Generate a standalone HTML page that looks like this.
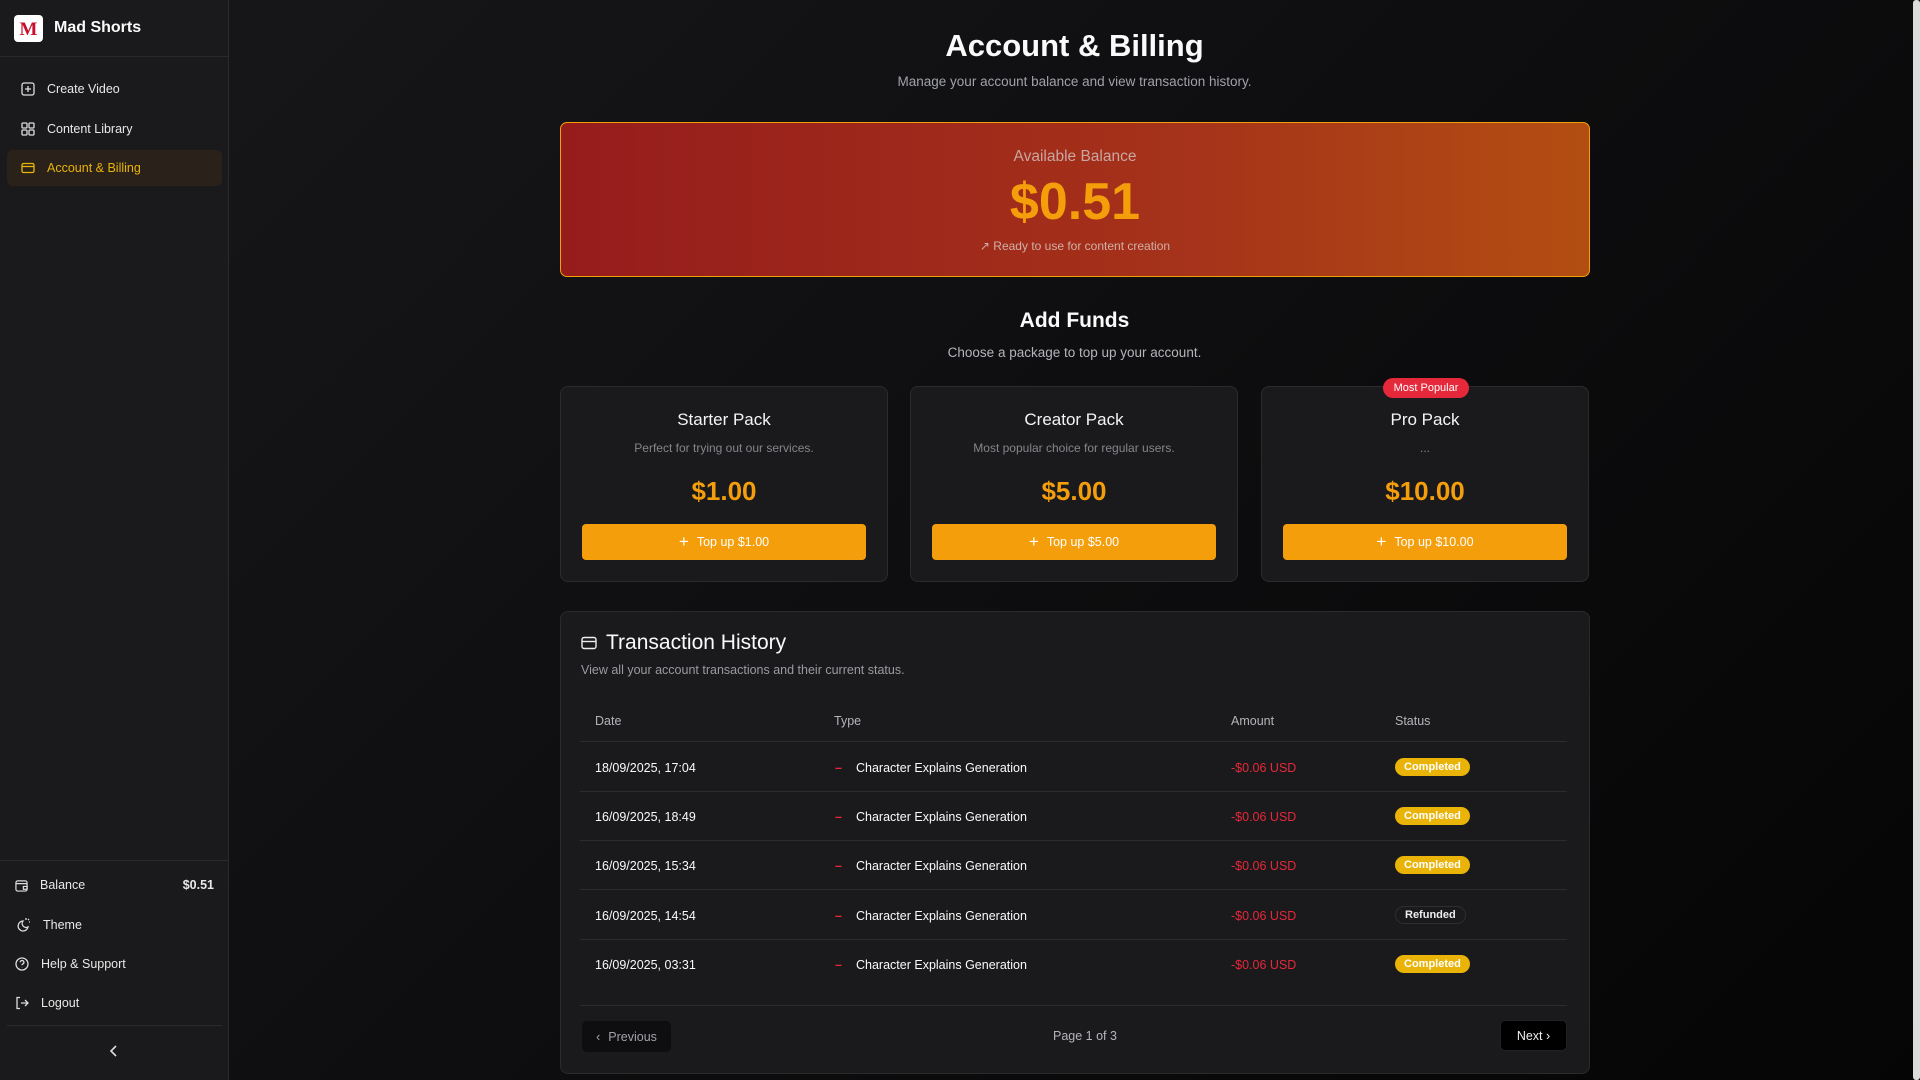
<!DOCTYPE html>
<html><head><meta charset="utf-8"><style>
*{box-sizing:border-box;margin:0;padding:0}
body{width:1920px;height:1080px;overflow:hidden;background:linear-gradient(135deg,#18181b 0%,#0e0e10 50%,#050505 100%);font-family:"Liberation Sans",sans-serif;color:#fafafa;position:relative}
.a{position:absolute}
.sb{left:0;top:0;width:229px;height:1080px;background:#1a1a1c;border-right:1px solid #2a2a2d}
.nav{left:7px;width:215px;height:36px;display:flex;align-items:center;padding-left:14px;font-size:12.5px;color:#e8e8e8;border-radius:6px}
.nav svg{margin-right:12px}
.ct{text-align:center;left:229px;width:1691px}
.card{background:#1a1a1c;border:1px solid #2b2b2e;border-radius:8px}
.pk{top:386px;width:328px;height:196px;text-align:center}
.pk h3{font-size:17px;font-weight:normal;margin-top:23px;color:#f4f4f5}
.pk p{font-size:12px;color:#85858b;margin-top:11px;height:14px}
.pk .pr{font-size:26px;font-weight:bold;color:#f59e0b;margin-top:21px}
.pk .bt{position:absolute;left:21px;right:21px;top:137px;height:36px;background:#f59e0b;border-radius:4px;color:#fff;font-size:12.5px;display:flex;align-items:center;justify-content:center;gap:8px}
.row{left:580px;width:987px;height:49px;border-bottom:1px solid #2c2c2f;font-size:12.5px}
.row span{position:absolute;top:18px}
.dash{color:#e5283a;font-weight:bold}
.bd{background:#eab308;color:#fff;border-radius:10px;padding:3px 9px;font-size:11px;font-weight:bold;top:15px!important}
.rf{background:transparent;border:1px solid #2e2e31;color:#eee;border-radius:10px;padding:2px 9px;font-size:11px;font-weight:bold;top:15px!important}
</style></head><body>
<div class="a sb">
 <div class="a" style="left:14px;top:15px;width:29px;height:27px;background:#fff;border-radius:4px;text-align:center;font:bold 19px 'Liberation Serif',serif;color:#c8102e;line-height:29px">M</div>
 <div class="a" style="left:54px;top:19px;font-size:16px;font-weight:bold">Mad Shorts</div>
 <div class="a" style="left:0;top:56px;width:229px;border-top:1px solid #2a2a2d"></div>
 <div class="a nav" style="top:71px"><svg width="14" height="14" viewBox="0 0 14 14" fill="none" stroke="#ddd" stroke-width="1.3"><rect x="1" y="1" width="12" height="12" rx="2"/><path d="M7 4v6M4 7h6"/></svg>Create Video</div>
 <div class="a nav" style="top:111px"><svg width="14" height="14" viewBox="0 0 14 14" fill="none" stroke="#ddd" stroke-width="1.3"><rect x="1" y="1" width="5" height="5" rx="1"/><rect x="8" y="1" width="5" height="5" rx="1"/><rect x="1" y="8" width="5" height="5" rx="1"/><rect x="8" y="8" width="5" height="5" rx="1"/></svg>Content Library</div>
 <div class="a nav" style="top:150px;background:#2a221a;color:#eab308"><svg width="14" height="14" viewBox="0 0 14 14" fill="none" stroke="#eab308" stroke-width="1.3"><rect x="1" y="2.5" width="12" height="9" rx="1.5"/><path d="M1 5.5h12"/></svg>Account &amp; Billing</div>
 <div class="a" style="left:0;top:860px;width:229px;border-top:1px solid #2a2a2d"></div>
 <div class="a nav" style="top:867px;left:0;padding-left:15px;width:229px"><svg width="13" height="13" viewBox="0 0 14 14" fill="none" stroke="#ddd" stroke-width="1.3"><rect x="1" y="2" width="12" height="11" rx="2"/><path d="M1 5h12M9 8h4v3H9z"/></svg>Balance<span style="position:absolute;right:15px;font-weight:bold">$0.51</span></div>
 <div class="a nav" style="top:907px;left:0;padding-left:15px"><svg width="16" height="16" viewBox="0 0 16 16" fill="none" stroke="#ddd" stroke-width="1.3"><path d="M8 4a5 5 0 1 0 5 6 4 4 0 0 1-5-6z"/><path d="M11 1v2M14 5h1M13 3l1-1"/></svg>Theme</div>
 <div class="a nav" style="top:946px;left:0;padding-left:15px"><svg width="14" height="14" viewBox="0 0 14 14" fill="none" stroke="#ddd" stroke-width="1.3"><circle cx="7" cy="7" r="6"/><path d="M5.3 5.3a1.8 1.8 0 1 1 2.4 1.7c-.5.2-.7.6-.7 1.2M7 10.3v.2"/></svg>Help &amp; Support</div>
 <div class="a nav" style="top:985px;left:0;padding-left:15px"><svg width="14" height="14" viewBox="0 0 14 14" fill="none" stroke="#ddd" stroke-width="1.3"><path d="M5 1.5H2v11h3M6 7h7M10 4l3 3-3 3"/></svg>Logout</div>
 <div class="a" style="left:7px;top:1025px;width:215px;border-top:1px solid #2a2a2d"></div>
 <svg class="a" style="left:108px;top:1044px" width="12" height="14" viewBox="0 0 12 14" fill="none" stroke="#ddd" stroke-width="1.6"><path d="M8 2L3 7l5 5"/></svg>
</div>
<div class="a" style="left:1913px;top:0;width:7px;height:1080px;background:#dcdcdc;border-radius:3px"></div>

<div class="a ct" style="top:28px;font-size:31px;font-weight:bold">Account &amp; Billing</div>
<div class="a ct" style="top:74px;font-size:13.5px;color:#a1a1aa">Manage your account balance and view transaction history.</div>

<div class="a" style="left:560px;top:122px;width:1030px;height:155px;border:1px solid #f59e0b;border-radius:7px;background:linear-gradient(90deg,#961c1c,#a5321a 60%,#b34e12);text-align:center">
 <div style="margin-top:25px;font-size:15.5px;color:#c9a6a0">Available Balance</div>
 <div style="margin-top:6px;font-size:52px;font-weight:bold;color:#f59e0b">$0.51</div>
 <div style="margin-top:7px;font-size:12px;color:#d0b0a8">↗ Ready to use for content creation</div>
</div>

<div class="a ct" style="top:309px;font-size:21px;font-weight:bold">Add Funds</div>
<div class="a ct" style="top:345px;font-size:13.5px;color:#b4b4ba">Choose a package to top up your account.</div>

<div class="a card pk" style="left:560px"><h3>Starter Pack</h3><p>Perfect for trying out our services.</p><div class="pr">$1.00</div><div class="bt"><span style="font-size:17px">+</span>Top up $1.00</div></div>
<div class="a card pk" style="left:910px"><h3>Creator Pack</h3><p>Most popular choice for regular users.</p><div class="pr">$5.00</div><div class="bt"><span style="font-size:17px">+</span>Top up $5.00</div></div>
<div class="a card pk" style="left:1261px"><h3>Pro Pack</h3><p>...</p><div class="pr">$10.00</div><div class="bt"><span style="font-size:17px">+</span>Top up $10.00</div></div>
<div class="a" style="left:1383px;top:378px;width:86px;height:20px;background:#e5283a;border-radius:10px;color:#fff;font-size:11px;text-align:center;line-height:20px">Most Popular</div>

<div class="a card" style="left:560px;top:611px;width:1030px;height:463px"></div>
<svg class="a" style="left:581px;top:636px" width="16" height="14" viewBox="0 0 16 14" fill="none" stroke="#eee" stroke-width="1.4"><rect x="1" y="1.5" width="14" height="11" rx="2"/><path d="M1 5.5h14"/></svg>
<div class="a" style="left:606px;top:631px;font-size:21px">Transaction History</div>
<div class="a" style="left:581px;top:663px;font-size:12.5px;color:#9a9aa0">View all your account transactions and their current status.</div>
<div class="a row" style="top:693px;color:#b4b4ba"><span style="left:15px;top:21px">Date</span><span style="left:254px;top:21px">Type</span><span style="left:651px;top:21px">Amount</span><span style="left:815px;top:21px">Status</span></div>
<div class="a row" style="top:743px"><span style="left:15px">18/09/2025, 17:04</span><span class="dash" style="left:255px">–</span><span style="left:276px">Character Explains Generation</span><span style="left:651px;color:#e5283a">-$0.06 USD</span><span class="bd" style="left:815px">Completed</span></div>
<div class="a row" style="top:792px"><span style="left:15px">16/09/2025, 18:49</span><span class="dash" style="left:255px">–</span><span style="left:276px">Character Explains Generation</span><span style="left:651px;color:#e5283a">-$0.06 USD</span><span class="bd" style="left:815px">Completed</span></div>
<div class="a row" style="top:841px"><span style="left:15px">16/09/2025, 15:34</span><span class="dash" style="left:255px">–</span><span style="left:276px">Character Explains Generation</span><span style="left:651px;color:#e5283a">-$0.06 USD</span><span class="bd" style="left:815px">Completed</span></div>
<div class="a row" style="top:891px"><span style="left:15px">16/09/2025, 14:54</span><span class="dash" style="left:255px">–</span><span style="left:276px">Character Explains Generation</span><span style="left:651px;color:#e5283a">-$0.06 USD</span><span class="rf" style="left:815px">Refunded</span></div>
<div class="a row" style="top:940px;height:66px"><span style="left:15px">16/09/2025, 03:31</span><span class="dash" style="left:255px">–</span><span style="left:276px">Character Explains Generation</span><span style="left:651px;color:#e5283a">-$0.06 USD</span><span class="bd" style="left:815px">Completed</span></div>
<div class="a" style="left:582px;top:1021px;width:89px;height:31px;background:#0e0e10;border-radius:5px;color:#a1a1aa;font-size:12.5px;display:flex;align-items:center;justify-content:center;gap:8px">‹ <span>Previous</span></div>
<div class="a" style="left:1000px;top:1029px;width:170px;text-align:center;font-size:12.5px;color:#b4b4ba">Page 1 of 3</div>
<div class="a" style="left:1500px;top:1020px;width:67px;height:31px;background:#000;border:1px solid #222;border-radius:5px;color:#eee;font-size:12.5px;display:flex;align-items:center;justify-content:center;gap:8px">Next ›</div>
</body></html>
